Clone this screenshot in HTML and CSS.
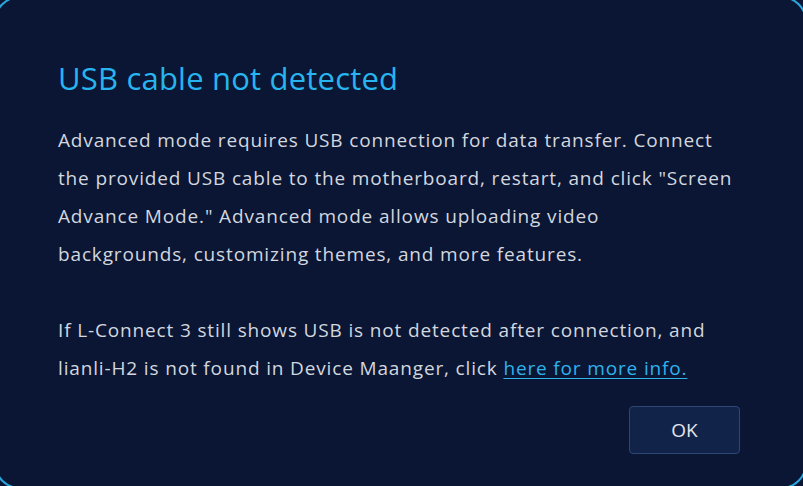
FILE: index.html
```html
<!DOCTYPE html>
<html lang="en">
<head>
    <meta charset="UTF-8">
    <meta name="viewport" content="width=device-width, initial-scale=1.0">
    <title>USB cable not detected</title>
    <link rel="stylesheet" href="styles.css">
</head>
<body>
    <div class="dialog">
        <h1 class="dialog-title">USB cable not detected</h1>
        <div class="dialog-text">
            <p>Advanced mode requires USB connection for data transfer. Connect the provided USB cable to the motherboard, restart, and click "Screen Advance Mode." Advanced mode allows uploading video backgrounds, customizing themes, and more features.</p>
            <p>If L-Connect 3 still shows USB is not detected after connection, and <span class="nowrap">lianli-H2</span> is not found in Device Maanger, click <a href="#" class="info-link">here for more info.</a></p>
        </div>
        <div class="dialog-actions">
            <button type="button" class="ok-button">OK</button>
        </div>
    </div>
</body>
</html>
```

FILE: styles.css
```css
html, body {
    margin: 0;
    padding: 0;
    background-color: #0a1634;
    overflow: hidden;
    height: 100%;
}
body {
    font-family: "Open Sans", Lato, sans-serif;
}
.dialog {
    box-sizing: border-box;
    width: 813px;
    height: 493px;
    margin: -4px 0 0 -6px;
    border: 2px solid #2aa6dc;
    border-radius: 26px;
    background-color: #0a1634;
    padding: 60px 62px 0 62px;
}
.dialog-title {
    margin: 0;
    font-size: 31px;
    font-weight: 400;
    line-height: 40px;
    letter-spacing: 0.2px;
    color: #28b4ee;
}
.dialog-text {
    margin-top: 23px;
    width: 676px;
    font-size: 19px;
    line-height: 38px;
    letter-spacing: 0.85px;
    color: #d3d7df;
}
.dialog-text p {
    margin: 0 0 38px 0;
}
.dialog-text p:last-child {
    margin-bottom: 0;
}
.nowrap {
    white-space: nowrap;
}
.info-link {
    color: #2fb2ec;
    text-decoration: underline;
    text-underline-offset: 3px;
}
.dialog-actions {
    display: flex;
    justify-content: flex-end;
    margin-top: 19px;
    width: 682px;
}
.ok-button {
    width: 111px;
    height: 48px;
    background-color: #12234a;
    border: 1px solid #2c4676;
    border-radius: 4px;
    color: #e2e5ec;
    font-family: "Open Sans", sans-serif;
    font-size: 19px;
    cursor: pointer;
}
```
